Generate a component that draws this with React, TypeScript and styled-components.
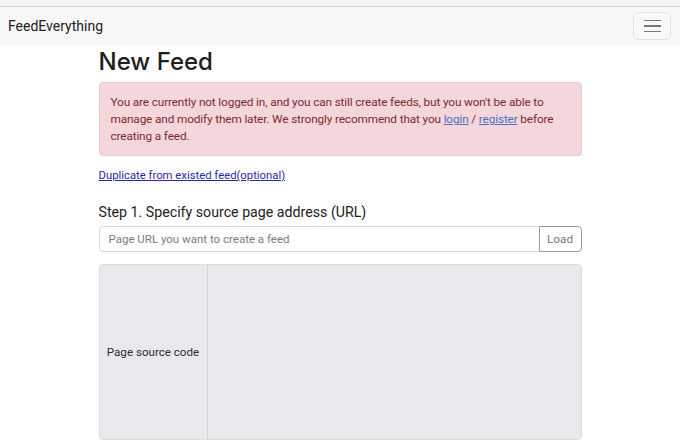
import React from 'react'
import styled, { createGlobalStyle } from 'styled-components'

const GlobalStyle = createGlobalStyle`
  html, body {
    margin: 0;
    padding: 0;
    background: #ffffff;
    font-family: Roboto, "Liberation Sans", sans-serif;
    color: #212529;
  }
  * {
    box-sizing: border-box;
  }
`

const Page = styled.div`
  min-height: 443px;
  border-top: 6px solid #f4f4f4;
`

const Navbar = styled.nav`
  display: flex;
  align-items: center;
  justify-content: space-between;
  height: 39px;
  padding: 0 9px 0 8px;
  background: #f8f8f8;
  border-top: 1px solid #d0d0d0;
`

const Brand = styled.a`
  font-size: 14px;
  color: #222;
  text-decoration: none;
`

const Toggler = styled.button`
  width: 38px;
  height: 28px;
  display: flex;
  flex-direction: column;
  align-items: center;
  justify-content: center;
  gap: 4px;
  background: transparent;
  border: 1px solid #e2e2e2;
  border-radius: 5px;
  padding: 0;
`

const TogglerBar = styled.span`
  display: block;
  width: 17px;
  height: 1.5px;
  background: #777;
`

const Container = styled.main`
  width: 483px;
  margin: 0 auto;
  padding-top: 1px;
`

const Title = styled.h1`
  margin: 0 0 5px;
  font-family: Inter, Roboto, sans-serif;
  font-size: 24px;
  font-weight: 500;
  line-height: 31px;
  color: #1e1e1e;
`

const Alert = styled.div`
  background: #f5d6da;
  color: #7c2b33;
  border: 1px solid #f1c8cd;
  border-radius: 4px;
  padding: 11px 11px 10px;
  font-size: 11.8px;
  letter-spacing: -0.14px;
  line-height: 17px;
`

const AlertLink = styled.a`
  color: #4a6fc8;
  text-decoration: underline;
`

const DuplicateLink = styled.a`
  display: inline-block;
  margin-top: 13px;
  font-size: 11.3px;
  color: #2a2aa6;
  text-decoration: underline;
`

const StepTitle = styled.h5`
  margin: 20px 0 5px;
  font-size: 14.2px;
  font-weight: 400;
  line-height: 18px;
  color: #222;
`

const InputGroup = styled.div`
  display: flex;
  height: 26px;
`

const UrlInput = styled.input`
  flex: 1;
  min-width: 0;
  border: 1px solid #dadada;
  border-right: none;
  border-radius: 4px 0 0 4px;
  padding: 0 9px;
  font-family: inherit;
  font-size: 11.5px;
  color: #333;
  &::placeholder {
    color: #7d7d7d;
  }
`

const LoadButton = styled.button`
  width: 43px;
  border: 1px solid #9c9c9c;
  border-radius: 0 4px 4px 0;
  background: #fff;
  font-family: inherit;
  font-size: 11.8px;
  color: #7a7a7a;
  padding: 0;
`

const SourceGroup = styled.div`
  display: flex;
  margin-top: 12px;
  height: 176px;
  border: 1px solid #dcdce0;
  border-radius: 4px;
  background: #e9e8ed;
  overflow: hidden;
`

const SourceLabel = styled.label`
  width: 108px;
  display: flex;
  align-items: center;
  justify-content: center;
  font-size: 11.6px;
  color: #2c2c2c;
  border-right: 1px solid #d4d4d8;
`

const SourceArea = styled.textarea`
  flex: 1;
  border: none;
  background: #e9e8ed;
  resize: none;
  outline: none;
`

export default function App() {
  return (
    <Page>
      <GlobalStyle />
      <Navbar>
        <Brand href="#">FeedEverything</Brand>
        <Toggler aria-label="Toggle navigation">
          <TogglerBar />
          <TogglerBar />
          <TogglerBar />
        </Toggler>
      </Navbar>
      <Container>
        <Title>New Feed</Title>
        <Alert>
          You are currently not logged in, and you can still create feeds, but you won't be able to
          manage and modify them later. We strongly recommend that you{' '}
          <AlertLink href="#">login</AlertLink> / <AlertLink href="#">register</AlertLink> before
          creating a feed.
        </Alert>
        <DuplicateLink href="#">Duplicate from existed feed(optional)</DuplicateLink>
        <StepTitle>Step 1. Specify source page address (URL)</StepTitle>
        <InputGroup>
          <UrlInput placeholder="Page URL you want to create a feed" />
          <LoadButton>Load</LoadButton>
        </InputGroup>
        <SourceGroup>
          <SourceLabel>Page source code</SourceLabel>
          <SourceArea disabled />
        </SourceGroup>
      </Container>
    </Page>
  )
}
